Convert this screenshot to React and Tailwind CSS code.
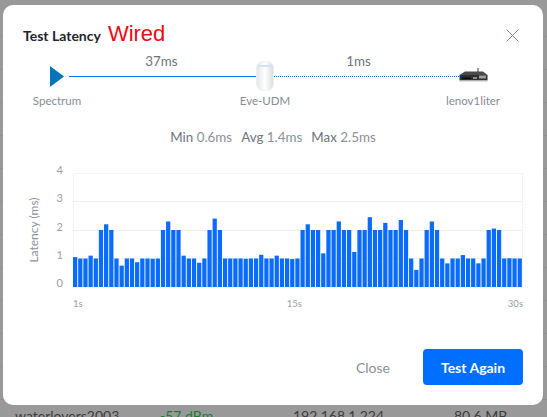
const LATENCY = [
  1.05, 1, 1, 1.1, 1, 2, 2.2, 2, 1, 0.75, 1, 1, 0.87, 1, 1, 0.99, 1, 2, 2.3, 2,
  2, 1.1, 1, 1, 0.85, 1, 2, 2.4, 2, 1, 1, 1, 1, 0.99, 1, 1, 1.13, 1, 1, 1.1,
  1, 1, 0.98, 1, 2, 2.2, 2, 2, 1.18, 2, 2, 2.3, 2, 2, 1.23, 2, 2, 2.45, 2, 2,
  2.25, 2, 2, 2.35, 2, 1, 0.6, 1, 2, 2.3, 2, 1, 0.83, 1, 1, 1.12, 1, 1, 0.83, 1,
  2, 2.05, 2, 1, 1.01, 1, 1,
];

const Y_TICKS = [4, 3, 2, 1, 0];

function RouterIcon() {
  return (
    <svg className="mb-[3px] shrink-0" width="29" height="14" viewBox="0 0 29 14">
      <rect x="18" y="0" width="2" height="5" fill="#9a9a9a" />
      <path d="M6 3.5 H24 L28.5 7 H0.5 Z" fill="#4a4a4a" />
      <rect x="0.5" y="7" width="28" height="5.5" fill="#2e2e2e" />
      <rect x="3" y="9.5" width="9" height="1.5" fill="#0d0d0d" />
      <rect x="14" y="9" width="4" height="2" fill="#8a8a8a" />
      <rect x="20" y="7.5" width="7" height="3" fill="#a0a0a0" />
      <rect x="0.5" y="12.5" width="28" height="1" fill="#c5c8cf" />
    </svg>
  );
}

function UdmIcon() {
  return (
    <div className="h-[30px] w-[18px] shrink-0 overflow-hidden rounded-[7px] border border-[#eef0f2] bg-gradient-to-r from-[#e6e7ea] via-white to-[#dcdee1]">
      <div className="mt-[3px] h-[2px] bg-[#d3e3f3]" />
    </div>
  );
}

function LatencyChart() {
  return (
    <div className="mt-[18px] flex h-[146px] text-[11px] text-[#9aa0a8]">
      <div className="flex w-[22px] items-center justify-center pb-[14px]">
        <span className="-rotate-90 whitespace-nowrap text-[12px] text-[#8b919a]">Latency (ms)</span>
      </div>
      <div className="flex w-[18px] flex-col justify-between pb-[21px] text-right leading-[12px]">
        {Y_TICKS.map((t) => (
          <span key={t}>{t}</span>
        ))}
      </div>
      <div className="ml-[10px] flex flex-1 flex-col pt-[9px]">
        <svg width="450" height="115" viewBox="0 0 450 115">
          <rect x="0.5" y="0.5" width="449" height="114" fill="none" stroke="#f3f4f5" />
          <line x1="0" x2="450" y1="28.5" y2="28.5" stroke="#f0f1f2" />
          <line x1="0" x2="450" y1="57.5" y2="57.5" stroke="#f0f1f2" />
          <line x1="0" x2="450" y1="85.5" y2="85.5" stroke="#f0f1f2" />
          {LATENCY.map((v, i) => (
            <rect
              key={i}
              x={i * 5.17}
              y={114 - v * 28.5}
              width={4.25}
              height={v * 28.5}
              fill="#0a6cff"
            />
          ))}
        </svg>
        <div className="mt-[10px] flex justify-between text-[9.5px] leading-[12px]">
          <span>1s</span>
          <span className="-ml-[2px]">15s</span>
          <span>30s</span>
        </div>
      </div>
    </div>
  );
}

export default function App() {
  return (
    <div className="relative h-[417px] w-[547px] overflow-hidden bg-[#999999] font-['Lato',sans-serif]">
      {/* page behind the modal */}
      <div className="flex h-full flex-col pt-[4px]">
        {[0, 1, 2, 3, 4, 5, 6, 7, 8, 9, 10, 11].map((r) => (
          <div key={r} className="h-[33px] shrink-0 border-b border-[#919191]" />
        ))}
      </div>
      <div className="absolute left-0 right-0 top-[407px] flex text-[14px] leading-[17px] text-[#3d3d3d]">
        <span className="ml-[15px] w-[145px]">waterlovers2003</span>
        <span className="w-[133px] text-[#1d7a36]">-57 dBm</span>
        <span className="w-[161px]">192.168.1.224</span>
        <span>80.6 MB</span>
      </div>

      {/* modal */}
      <div className="absolute left-[3px] top-[5px] flex h-[400px] w-[540px] flex-col rounded-[10px] bg-white px-[20px] pb-[20px] pt-[15px]">
        <div className="flex h-[27px] items-center">
          <div className="flex items-baseline">
            <span className="text-[14px] font-bold text-[#22262c]">Test Latency</span>
            <span className="ml-[7px] font-['Liberation_Sans',sans-serif] text-[22px] leading-[27px] text-[#ee0a14]">Wired</span>
          </div>
          <svg className="mb-[-3px] ml-auto mr-[4px]" width="13" height="13" viewBox="0 0 13 13">
            <path d="M0.5 0.5 L12.5 12.5 M12.5 0.5 L0.5 12.5" stroke="#7f8790" strokeWidth="1" fill="none" />
          </svg>
        </div>

        {/* topology */}
        <div className="mt-[5px] flex h-[18px] items-center text-[13.4px] text-[#6d747d]">
          <span className="ml-[122px] w-[33px] text-center">37ms</span>
          <span className="ml-[164px] w-[33px] text-center">1ms</span>
        </div>
        <div className="-mt-[9px] flex h-[30px] items-center">
          <svg className="ml-[27px] shrink-0" width="14" height="21" viewBox="0 0 14 21">
            <path d="M0 0 L14 10.5 L0 21 Z" fill="#0673bd" />
          </svg>
          <div className="ml-[5px] h-px flex-1 bg-[#006fff]" />
          <UdmIcon />
          <div className="h-0 w-[185px] border-t border-dotted border-t-[#006fff]" />
          <RouterIcon />
          <div className="w-[35px] shrink-0" />
        </div>
        <div className="mt-[2px] flex whitespace-nowrap text-[11.5px] leading-[16px] text-[#858c96]">
          <span className="ml-[4px] w-[60px] text-center">Spectrum</span>
          <span className="ml-[148px] w-[60px] text-center">Eve-UDM</span>
          <span className="ml-[148px] w-[60px] text-center">lenov1liter</span>
        </div>

        {/* stats */}
        <div className="mt-[19px] flex justify-center gap-[9px] text-[13.4px] leading-[18px] text-[#6d747d]">
          <span>Min <span className="text-[#8a919a]">0.6ms</span></span>
          <span>Avg <span className="text-[#8a919a]">1.4ms</span></span>
          <span>Max <span className="text-[#8a919a]">2.5ms</span></span>
        </div>

        <LatencyChart />

        <div className="mt-auto flex items-center justify-end">
          <button className="mr-[33px] text-[14px] text-[#8a919a]">Close</button>
          <button className="h-[36px] w-[100px] rounded-[4px] bg-[#006fff] text-[14px] font-bold text-white">Test Again</button>
        </div>
      </div>
    </div>
  );
}
